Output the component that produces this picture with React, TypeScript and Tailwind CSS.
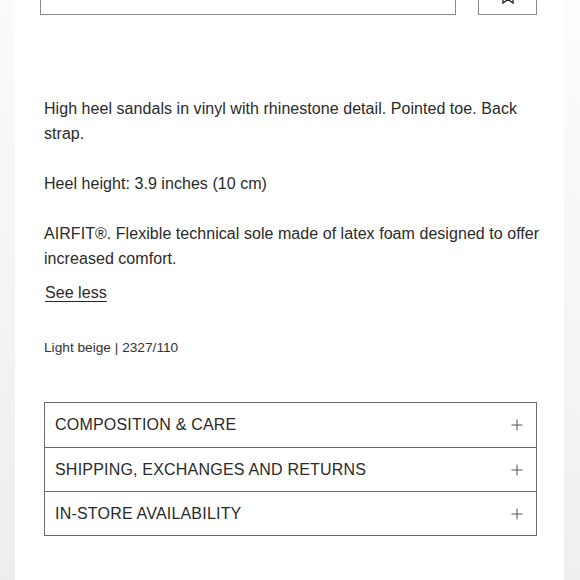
import React from "react";

const sections = ["COMPOSITION & CARE", "SHIPPING, EXCHANGES AND RETURNS", "IN-STORE AVAILABILITY"];

const Plus = () => (
  <svg width="12" height="12" viewBox="0 0 12 12" className="text-[#555]">
    <path d="M6 0.5V11.5M0.5 6H11.5" stroke="currentColor" strokeWidth="1" />
  </svg>
);

export default function App() {
  return (
    <div
      className="relative w-[580px] h-[580px] overflow-hidden bg-white text-[#2a2a2a]"
      style={{ fontFamily: '"Liberation Sans", Arial, sans-serif' }}
    >
      {/* soft page edges */}
      <div className="absolute left-0 top-0 h-full w-[15px] bg-gradient-to-b from-[#fbfbfb] to-[#ededed]" />
      <div className="absolute right-0 top-0 h-full w-[16px] bg-gradient-to-b from-[#fdfdfd] to-[#efefef]" />

      <div className="relative ml-[44px] w-[493px]">
        {/* cut-off top controls */}
        <div className="flex h-[15px] -ml-[4px] gap-[22px]">
          <div className="w-[416px] border-x border-b border-[#8a8a8a]" />
          <div className="relative w-[59px] border-x border-b border-[#8a8a8a]">
            <svg width="12" height="6" viewBox="0 0 12 6" className="absolute left-[23px] -top-[2px]">
              <path d="M1 0V5L6 1.5L11 5V0" fill="none" stroke="#222" strokeWidth="1.3" />
            </svg>
          </div>
        </div>

        <div className="mt-[81px] w-[496px] text-[16px] leading-[25px] tracking-[0.05px]">
          <p>High heel sandals in vinyl with rhinestone detail. Pointed toe. Back strap.</p>
          <p className="mt-[25px]">Heel height: 3.9 inches (10 cm)</p>
          <p className="mt-[25px]">AIRFIT®. Flexible technical sole made of latex foam designed to offer increased comfort.</p>
          <p className="mt-[9px] ml-[1px]">
            <span className="underline underline-offset-[3px] decoration-1">See less</span>
          </p>
        </div>

        <p className="mt-[33px] text-[13.7px] leading-[20px] text-[#333]">Light beige | 2327/110</p>

        <div className="mt-[44px] border border-[#6b6b6b]">
          {sections.map((s, i) => (
            <div
              key={s}
              className={`flex h-[44px] items-center justify-between pl-[10px] pr-[13px] ${i > 0 ? "border-t border-[#6b6b6b]" : ""}`}
            >
              <span className="text-[16px] tracking-[0.2px] text-[#2a2a2a]">{s}</span>
              <Plus />
            </div>
          ))}
        </div>
      </div>
    </div>
  );
}
